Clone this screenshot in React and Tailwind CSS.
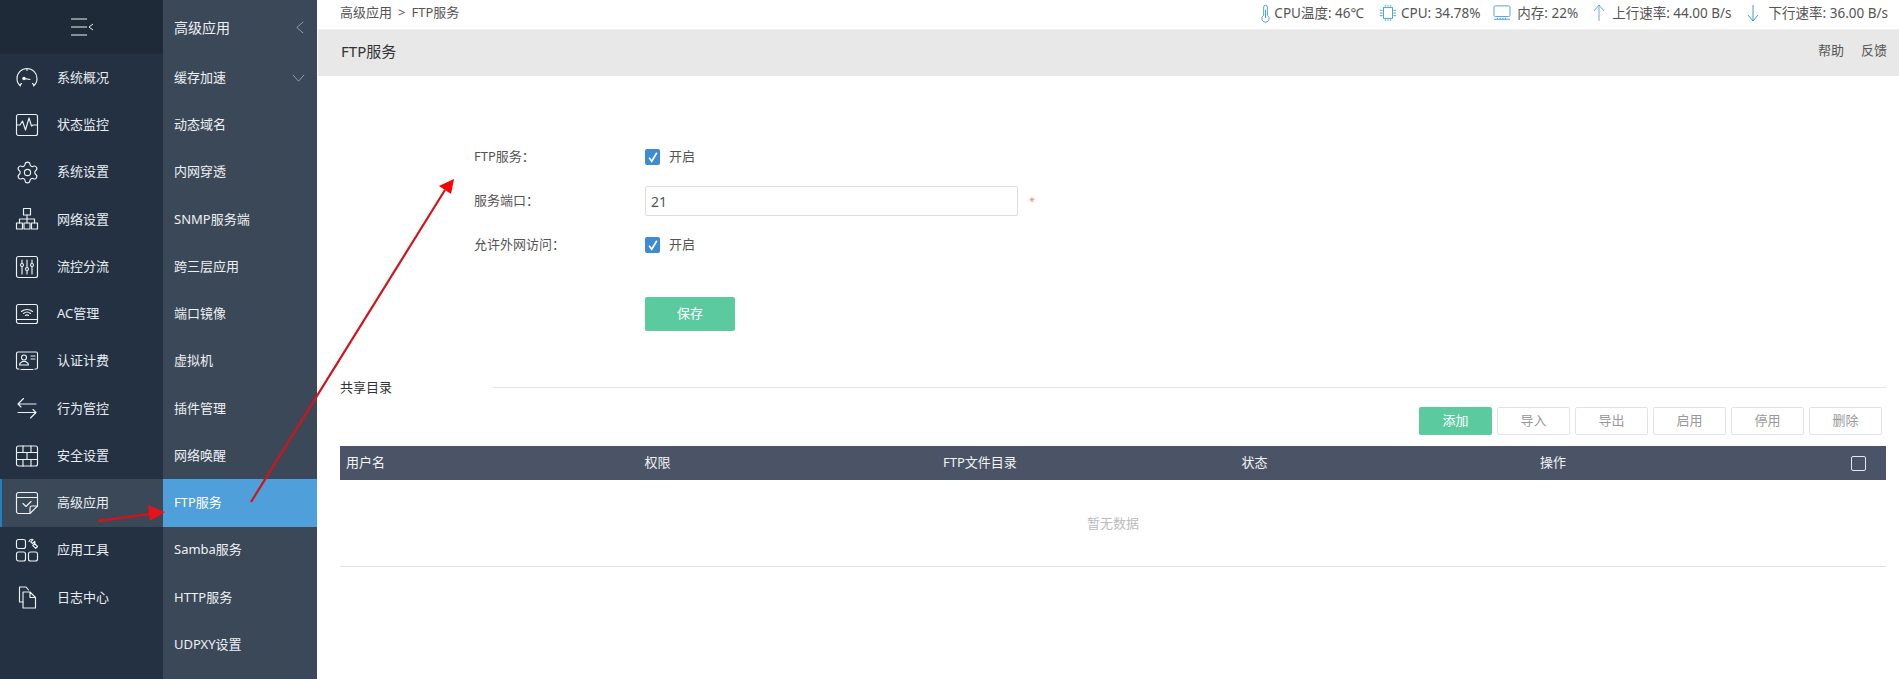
import React from 'react'
import { Settings } from 'lucide-react'

const FONT = "font-['Noto_Sans','Noto_Sans_CJK_SC',sans-serif]"

// ── Sidebar icons ───────────────────────────────────────────────────────────
const Svg = ({ children, className = 'w-[24px] h-[24px]' }) => (
  <svg viewBox="0 0 24 24" fill="none" stroke="#eef1f4" strokeWidth="1.15" strokeLinecap="round" strokeLinejoin="round" className={className}>
    {children}
  </svg>
)

const icons = {
  gauge: (
    <Svg>
      <path d="M5.500 20c-2-1.600-3.500-4.200-3.500-7.500a10 10 0 0 1 20 0c0 3.300-1.500 5.900-3.500 7.500" />
      <path d="M5 19l1.500-1.500M19 19l-1.500-1.500M12 3v1.500" />
      <circle cx="9" cy="12.500" r="1.200" fill="#eef1f4" />
      <path d="M10 12.600l5 .9" />
    </Svg>
  ),
  monitor: (
    <Svg>
      <rect x="1.500" y="1.500" width="21" height="21" rx="2" />
      <path d="M2 12h3l2.500-4 3 9 3.500-12 2.500 8 1.500-1H22" />
    </Svg>
  ),
  network: (
    <Svg>
      <rect x="8.500" y="1.500" width="7" height="6.500" />
      <rect x="1.500" y="16" width="6" height="6" />
      <rect x="9" y="16" width="6" height="6" />
      <rect x="16.500" y="16" width="6" height="6" />
      <path d="M12 8v8M4.500 16v-4h15v4" />
    </Svg>
  ),
  sliders: (
    <Svg>
      <rect x="1.500" y="1.500" width="21" height="21" rx="2" />
      <path d="M7 5v14M12 5v14M17 5v14" />
      <circle cx="7" cy="10" r="1.500" fill="#233142" />
      <circle cx="12" cy="14" r="1.500" fill="#233142" />
      <circle cx="17" cy="10" r="1.500" fill="#233142" />
    </Svg>
  ),
  wifi: (
    <Svg>
      <rect x="1.500" y="2.500" width="21" height="19" rx="2" />
      <path d="M2 17.500h20" />
      <path d="M6.500 9.500c3-2.700 8-2.700 11 0M8.500 11.500c2-1.700 5-1.700 7 0M10.500 13.500c.9-.7 2.100-.7 3 0" />
    </Svg>
  ),
  card: (
    <Svg>
      <path d="M4 20H3a1.500 1.500 0 0 1-1.500-1.500v-14A1.500 1.500 0 0 1 3 3h18a1.500 1.500 0 0 1 1.500 1.500v14A1.500 1.500 0 0 1 21 20h-1" />
      <circle cx="9" cy="8.500" r="2.500" />
      <path d="M4.500 16c0-2.500 2-3 3-3.500h3c1 .5 3 1 3 3.500zM16 7h4M16 10h4M6 20.500h12" />
    </Svg>
  ),
  arrows: (
    <Svg>
      <path d="M21 8H3l5.500-5.500M3 8l3 3M3 16.500h18L15.500 22M21 16.500l-3-3" />
    </Svg>
  ),
  wall: (
    <Svg>
      <rect x="1.500" y="2" width="21" height="20" rx="2" />
      <path d="M1.500 8.500h21M1.500 15.500h21M8 2v6.500M16 2v6.500M12 8.500v7M8 15.500V22M16 15.500V22" />
    </Svg>
  ),
  task: (
    <Svg>
      <path d="M15 22.500H3.500a2 2 0 0 1-2-2V3.500a2 2 0 0 1 2-2h17a2 2 0 0 1 2 2V15z" />
      <path d="M15 22.500V17a2 2 0 0 1 2-2h5.500M1.500 6.500h21M8 12.500l3 3 5-5" />
    </Svg>
  ),
  tools: (
    <Svg>
      <rect x="1.500" y="1.500" width="9" height="9" rx="2" />
      <rect x="1.500" y="14" width="9" height="9" rx="2" />
      <rect x="13.500" y="14" width="9" height="9" rx="2" />
      <path d="M14 3.500a3.200 3.200 0 0 1 4-2L15.800 3.800l1.700 1.700 2.200-2.200a3.200 3.200 0 0 1-2 4l3 3 1.800-1.800-3-3" />
    </Svg>
  ),
  files: (
    <Svg>
      <path d="M8 17H4.500V2H11l2.500 3" />
      <path d="M8 7h7l5.500 5.500V23H8zM15 7v5.500h5.500" />
    </Svg>
  ),
}

const mainNav = [
  ['系统概况', icons.gauge],
  ['状态监控', icons.monitor],
  ['系统设置', <Settings key="gear" size={25} strokeWidth={1.1} color="#eef1f4" />],
  ['网络设置', icons.network],
  ['流控分流', icons.sliders],
  ['AC管理', icons.wifi],
  ['认证计费', icons.card],
  ['行为管控', icons.arrows],
  ['安全设置', icons.wall],
  ['高级应用', icons.task],
  ['应用工具', icons.tools],
  ['日志中心', icons.files],
]

const subNav = ['缓存加速', '动态域名', '内网穿透', 'SNMP服务端', '跨三层应用', '端口镜像', '虚拟机', '插件管理', '网络唤醒', 'FTP服务', 'Samba服务', 'HTTP服务', 'UDPXY设置']

function Sidebar() {
  return (
    <aside className="w-[163px] shrink-0 bg-[#233142] flex flex-col">
      <div className="h-[54px] bg-[#1e2a38] flex items-center justify-center">
        <svg viewBox="0 0 24 20" fill="none" stroke="#eef1f4" strokeWidth="1" className="w-[24px] h-[20px]">
          <path d="M1 2h16M1 10h16M1 18h16M23 7l-4 3 4 3" />
        </svg>
      </div>
      {mainNav.map(([label, icon]) => {
        const active = label === '高级应用'
        return (
          <div
            key={label}
            className={`h-[47.25px] flex items-center text-[13px] text-[#e8edf2] border-l-2 pl-[13px] ${active ? 'bg-[#3b4858] border-[#1f80c4]' : 'border-transparent'}`}
          >
            <span className="w-[42px] shrink-0 flex">{icon}</span>
            {label}
          </div>
        )
      })}
    </aside>
  )
}

function SubNav() {
  return (
    <nav className="w-[154px] shrink-0 bg-[#3b4858] flex flex-col text-[#eef1f4]">
      <div className="h-[54px] flex items-center justify-between pl-[11px] pr-[13px] text-[14px]">
        高级应用
        <svg viewBox="0 0 10 16" fill="none" stroke="#a9b2bc" strokeWidth="1" className="w-[8px] h-[13px]">
          <path d="M9 1L1 8l8 7" />
        </svg>
      </div>
      {subNav.map((label, i) => (
        <div
          key={label}
          className={`h-[47.25px] flex items-center justify-between pl-[11px] pr-[12px] text-[13px] ${label === 'FTP服务' ? 'bg-[#4f9fda] text-white' : ''}`}
        >
          {label}
          {i === 0 && (
            <svg viewBox="0 0 16 10" fill="none" stroke="#a9b2bc" strokeWidth="1" className="w-[13px] h-[8px]">
              <path d="M1 1l7 8 7-8" />
            </svg>
          )}
        </div>
      ))}
    </nav>
  )
}

// ── Top status bar ──────────────────────────────────────────────────────────
const statIcon = { fill: 'none', stroke: '#3f9ad6', strokeWidth: 1 }

function StatusBar() {
  return (
    <div className="flex items-center text-[13.5px] text-[#555]">
      <svg viewBox="0 0 12 20" {...statIcon} className="w-[11px] h-[19px] mr-[3px]">
        <path d="M4 3a2 2 0 0 1 4 0v9a4 4 0 1 1-4 0z" />
        <path d="M6 6v9" />
      </svg>
      <span>CPU温度: 46℃</span>
      <svg viewBox="0 0 20 20" {...statIcon} className="w-[18px] h-[18px] ml-[15px] mr-[4px]">
        <rect x="5" y="4" width="10" height="12" />
        <path d="M1 7h3M1 10h3M1 13h3M16 7h3M16 10h3M16 13h3M7 1v2M10 1v2M13 1v2M7 17v2M10 17v2M13 17v2" />
      </svg>
      <span>CPU: 34.78%</span>
      <svg viewBox="0 0 20 18" {...statIcon} className="w-[18px] h-[16px] ml-[13px] mr-[6px]">
        <rect x="1" y="1" width="18" height="12" rx="1.500" />
        <path d="M1 16h18M5 14.500v2M8 14.500v2M11 14.500v2M14 14.500v2" />
      </svg>
      <span>内存: 22%</span>
      <svg viewBox="0 0 12 18" {...statIcon} stroke="#6eaed2" className="w-[12px] h-[18px] ml-[15px] mr-[7px]">
        <path d="M6 17V1M1 7l5-6 5 6" />
      </svg>
      <span>上行速率: 44.00 B/s</span>
      <svg viewBox="0 0 12 18" {...statIcon} className="w-[12px] h-[18px] ml-[15px] mr-[10px]">
        <path d="M6 1v16M1 11l5 6 5-6" />
      </svg>
      <span>下行速率: 36.00 B/s</span>
    </div>
  )
}

// ── Form ────────────────────────────────────────────────────────────────────
const Check = () => (
  <span className="w-[15px] h-[16px] rounded-[2px] bg-[#3f8bd3] flex items-center justify-center mr-[9px]">
    <svg viewBox="0 0 14 14" fill="none" stroke="#fff" strokeWidth="2" className="w-[12px] h-[12px]">
      <path d="M2.500 8l3 4 6-10" />
    </svg>
  </span>
)

function FormRow({ label, children }) {
  return (
    <div className="h-[44px] flex items-center text-[13px] text-[#555]">
      <span className="w-[171px] shrink-0">{label}</span>
      {children}
    </div>
  )
}

const toolButtons = ['导入', '导出', '启用', '停用', '删除']
const columns = ['用户名', '权限', 'FTP文件目录', '状态', '操作']

export default function App() {
  return (
    <div className={`relative w-[1899px] h-[679px] flex overflow-hidden bg-white ${FONT}`}>
      <Sidebar />
      <SubNav />

      <main className="flex-1 min-w-0 flex flex-col">
        <header className="h-[30px] shrink-0 flex items-center justify-between pl-[23px] pr-[11px] pb-[3px] border-b border-[#f0f0f0]">
          <span className="text-[13px] text-[#555]">
            高级应用<span className="mx-[6px]">&gt;</span>FTP服务
          </span>
          <StatusBar />
        </header>
        <div className="h-[46px] shrink-0 bg-[#e8e8e8] flex items-center justify-between pl-[23px] pr-[12px] pb-[4px] ml-px">
          <span className="text-[15px] text-[#333]">FTP服务</span>
          <span className="flex gap-[17px] text-[13px] text-[#555]">
            <span>帮助</span>
            <span>反馈</span>
          </span>
        </div>

        <section className="pl-[157px] pt-[59px]">
          <FormRow label="FTP服务：">
            <Check />
            开启
          </FormRow>
          <FormRow label="服务端口：">
            <div className="w-[373px] h-[30px] border border-[#ddd] rounded-[2px] flex items-center pl-[5px] text-[14px]">21</div>
            <span className="ml-[11px] text-[11px] text-[#ee8a8a]">*</span>
          </FormRow>
          <FormRow label="允许外网访问：">
            <Check />
            开启
          </FormRow>
          <button className="ml-[171px] mt-[30px] w-[90px] h-[34px] rounded-[2px] bg-[#5bcb9f] text-white text-[13px] flex items-center justify-center">
            保存
          </button>
        </section>

        <section className="pl-[23px] pr-[13px] mt-[47px]">
          <div className="h-[20px] flex items-center text-[13px] text-[#333]">
            <span className="w-[153px] shrink-0">共享目录</span>
            <div className="flex-1 border-t border-[#e4e4e4] -mt-[2px]" />
          </div>

          <div className="flex justify-end gap-[5px] pr-[4px] mt-[9px] text-[13px]">
            <button className="w-[73px] h-[28px] rounded-[2px] bg-[#5bcb9f] text-white">添加</button>
            {toolButtons.map((b) => (
              <button key={b} className="w-[73px] h-[28px] rounded-[2px] border border-[#e3e3e3] text-[#999]">
                {b}
              </button>
            ))}
          </div>

          <div className="mt-[11px] h-[34px] bg-[#4b5367] flex items-center text-[13px] text-[#f2f3f5]">
            {columns.map((c) => (
              <span key={c} className="w-[298.5px] shrink-0 pl-[6px]">{c}</span>
            ))}
            <span className="flex-1 flex justify-end pr-[20px]">
              <span className="w-[15px] h-[15px] rounded-[2px] border border-[#e6e8ec]" />
            </span>
          </div>
          <div className="h-[87px] pt-[2px] border-b border-[#e2e2e2] flex items-center justify-center text-[13px] text-[#bbb]">
            暂无数据
          </div>
        </section>
      </main>

      {/* Red annotation arrows drawn over the screenshot */}
      <svg viewBox="0 0 1899 679" className="absolute inset-0 w-[1899px] h-[679px] pointer-events-none">
        <path d="M98 521L150 514" stroke="#d0141c" strokeWidth="2.500" fill="none" />
        <polygon points="165,512 148,505 150,521" fill="#e8121a" />
        <path d="M251 502L445 190" stroke="#d0141c" strokeWidth="2.200" fill="none" />
        <polygon points="454,179 439,186 451,194" fill="#f00" />
      </svg>
    </div>
  )
}
